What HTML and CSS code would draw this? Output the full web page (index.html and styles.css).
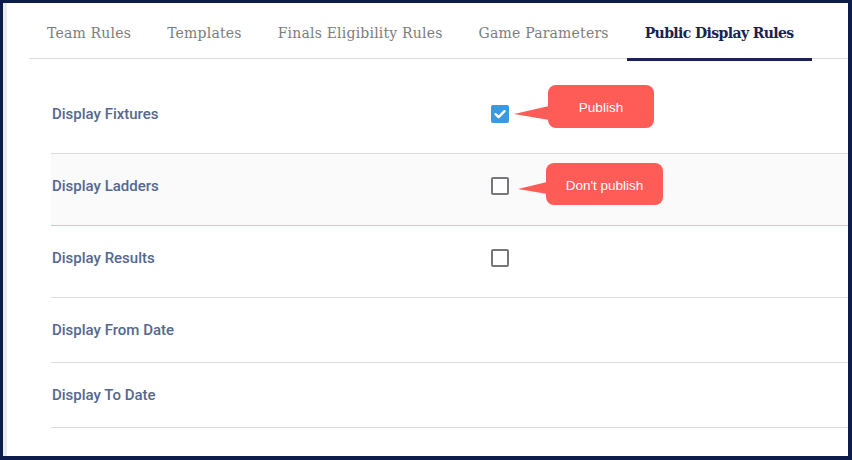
FILE: index.html
```html
<!DOCTYPE html>
<html>
<head>
<meta charset="utf-8">
<link rel="stylesheet" href="styles.css">
</head>
<body>
<div class="frame">
  <div class="strip"></div>
  <div class="content">
    <nav class="tabs">
      <div class="tab">Team Rules</div>
      <div class="tab">Templates</div>
      <div class="tab">Finals Eligibility Rules</div>
      <div class="tab">Game Parameters</div>
      <div class="tab active">Public Display Rules</div>
    </nav>
    <div class="rows">
      <div class="row tall">
        <div class="label">Display Fixtures</div>
        <div class="cell">
          <span class="cb checked"><svg width="18" height="18" viewBox="0 0 18 18"><polyline points="4.5,9.2 7.6,12.2 13.5,6.2" fill="none" stroke="#fff" stroke-width="2.4" stroke-linecap="round" stroke-linejoin="round"/></svg></span>
          <div class="callout publish">
            <svg class="tail" width="34" height="43" viewBox="0 0 34 43"><polygon points="0,29 35,21 35,35" fill="#ff5b57"/></svg>
            Publish
          </div>
        </div>
      </div>
      <div class="row tall shaded">
        <div class="label">Display Ladders</div>
        <div class="cell">
          <span class="cb"></span>
          <div class="callout nopublish">
            <svg class="tail" width="28" height="42" viewBox="0 0 28 42"><polygon points="0,26 29,19 29,31" fill="#ff5b57"/></svg>
            Don't publish
          </div>
        </div>
      </div>
      <div class="row tall">
        <div class="label">Display Results</div>
        <div class="cell"><span class="cb"></span></div>
      </div>
      <div class="row short">
        <div class="label">Display From Date</div>
        <div class="cell"></div>
      </div>
      <div class="row short">
        <div class="label">Display To Date</div>
        <div class="cell"></div>
      </div>
    </div>
  </div>
</div>
</body>
</html>
```
FILE: styles.css
```css
html, body {
  margin: 0;
  padding: 0;
  background: #0c1d4b;
}
.frame {
  box-sizing: border-box;
  width: 852px;
  height: 460px;
  border-style: solid;
  border-color: #0c1d4b;
  border-width: 3px 4px 4px 3px;
  background: #ffffff;
  display: flex;
}
.strip {
  width: 4px;
  background: #ebebeb;
  flex: none;
}
.content {
  flex: 1;
  min-width: 0;
}
.tabs {
  display: flex;
  margin-left: 22px;
  border-bottom: 1px solid #dcdcdc;
}
.tab {
  font-family: "DejaVu Serif", serif;
  font-size: 14px;
  line-height: 20px;
  letter-spacing: 0.2px;
  color: #7d7d7d;
  padding: 20px 18px 15px;
  border-bottom: 3px solid transparent;
  margin-bottom: -3px;
  white-space: nowrap;
}
.tab.active {
  color: #1b2152;
  font-weight: bold;
  letter-spacing: -0.6px;
  border-bottom-color: #1b2152;
}
.rows {
  margin: 23px 0 0 44px;
}
.row {
  box-sizing: border-box;
  display: grid;
  grid-template-columns: 439px 1fr;
  padding: 23px 0 0 1px;
  border-bottom: 1px solid #dcdcdc;
}
.row.tall { height: 72px; }
.row.short { height: 65px; }
.row.shaded {
  background: #fafafa;
  border-bottom-color: #a9d5ea;
}
.label {
  font-family: Roboto, "Noto Sans", sans-serif;
  font-weight: 500;
  font-size: 15px;
  line-height: 18px;
  color: #55678f;
}
.cell {
  position: relative;
  height: 18px;
}
.cb {
  box-sizing: border-box;
  display: block;
  width: 18px;
  height: 18px;
  border: 2px solid #77777b;
  border-radius: 2px;
  background: #fff;
}
.cb.checked {
  border: none;
  background: #3b99e0;
}
.cb svg { display: block; }
.callout {
  position: absolute;
  display: flex;
  align-items: center;
  justify-content: center;
  background: #ff5b57;
  color: #ffffff;
  font-family: "Liberation Sans", Arial, sans-serif;
  font-size: 13.5px;
  border-radius: 8px;
  box-sizing: border-box;
  padding-top: 2px;
}
.callout.publish {
  left: 57px;
  top: -20px;
  width: 106px;
  height: 43px;
}
.callout.nopublish {
  left: 55px;
  top: -14px;
  width: 117px;
  height: 42px;
}
.tail {
  position: absolute;
  top: 0;
}
.publish .tail { left: -34px; }
.nopublish .tail { left: -28px; }
```
